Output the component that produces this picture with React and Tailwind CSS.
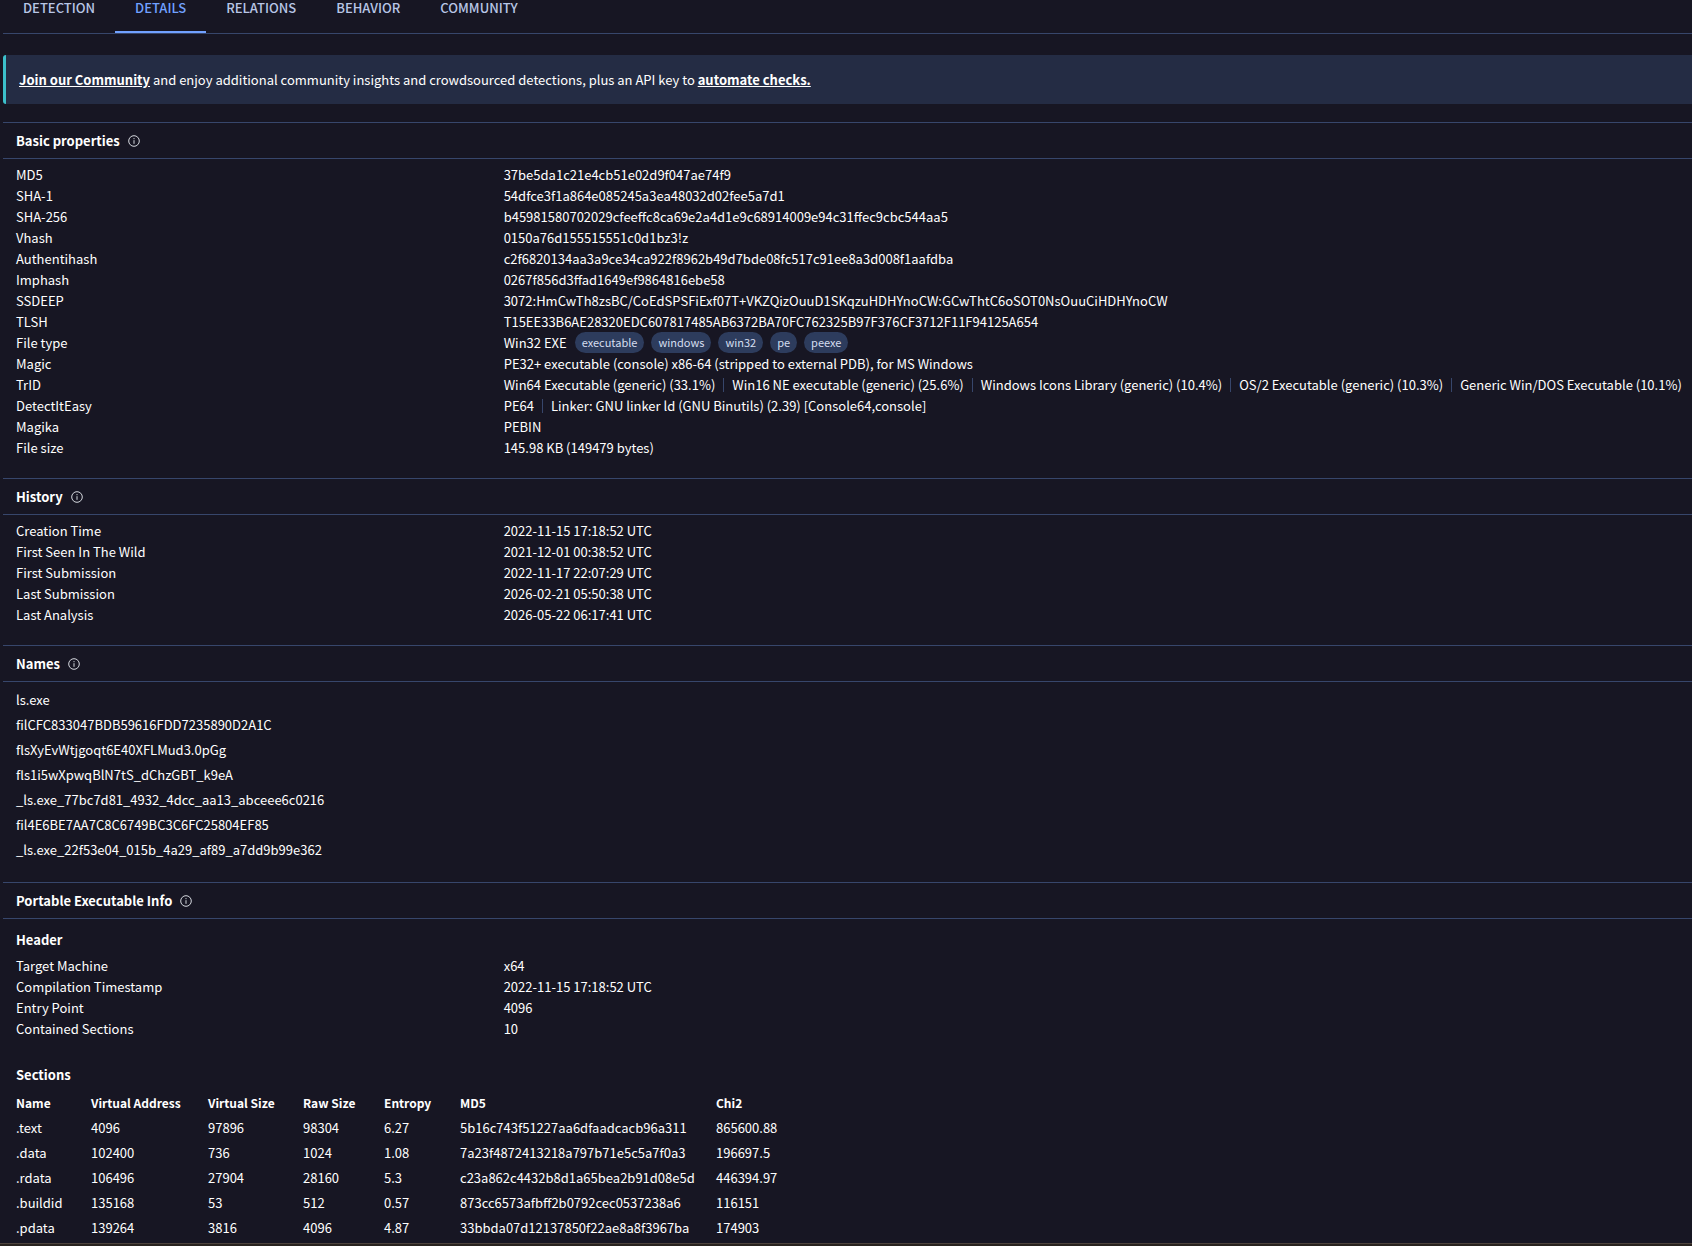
const tabs = ['DETECTION', 'DETAILS', 'RELATIONS', 'BEHAVIOR', 'COMMUNITY'];

const basicProperties = [
  { label: 'MD5', value: '37be5da1c21e4cb51e02d9f047ae74f9' },
  { label: 'SHA-1', value: '54dfce3f1a864e085245a3ea48032d02fee5a7d1' },
  { label: 'SHA-256', value: 'b45981580702029cfeeffc8ca69e2a4d1e9c68914009e94c31ffec9cbc544aa5' },
  { label: 'Vhash', value: '0150a76d155515551c0d1bz3!z' },
  { label: 'Authentihash', value: 'c2f6820134aa3a9ce34ca922f8962b49d7bde08fc517c91ee8a3d008f1aafdba' },
  { label: 'Imphash', value: '0267f856d3ffad1649ef9864816ebe58' },
  { label: 'SSDEEP', value: '3072:HmCwTh8zsBC/CoEdSPSFiExf07T+VKZQizOuuD1SKqzuHDHYnoCW:GCwThtC6oSOT0NsOuuCiHDHYnoCW' },
  { label: 'TLSH', value: 'T15EE33B6AE28320EDC607817485AB6372BA70FC762325B97F376CF3712F11F94125A654' },
  { label: 'File type', value: 'Win32 EXE', tags: ['executable', 'windows', 'win32', 'pe', 'peexe'] },
  { label: 'Magic', value: 'PE32+ executable (console) x86-64 (stripped to external PDB), for MS Windows' },
  {
    label: 'TrID',
    value: [
      'Win64 Executable (generic) (33.1%)',
      'Win16 NE executable (generic) (25.6%)',
      'Windows Icons Library (generic) (10.4%)',
      'OS/2 Executable (generic) (10.3%)',
      'Generic Win/DOS Executable (10.1%)',
    ],
  },
  { label: 'DetectItEasy', value: ['PE64', 'Linker: GNU linker ld (GNU Binutils) (2.39) [Console64,console]'] },
  { label: 'Magika', value: 'PEBIN' },
  { label: 'File size', value: '145.98 KB (149479 bytes)' },
];

const history = [
  { label: 'Creation Time', value: '2022-11-15 17:18:52 UTC' },
  { label: 'First Seen In The Wild', value: '2021-12-01 00:38:52 UTC' },
  { label: 'First Submission', value: '2022-11-17 22:07:29 UTC' },
  { label: 'Last Submission', value: '2026-02-21 05:50:38 UTC' },
  { label: 'Last Analysis', value: '2026-05-22 06:17:41 UTC' },
];

const names = [
  'ls.exe',
  'filCFC833047BDB59616FDD7235890D2A1C',
  'flsXyEvWtjgoqt6E40XFLMud3.0pGg',
  'fls1i5wXpwqBlN7tS_dChzGBT_k9eA',
  '_ls.exe_77bc7d81_4932_4dcc_aa13_abceee6c0216',
  'fil4E6BE7AA7C8C6749BC3C6FC25804EF85',
  '_ls.exe_22f53e04_015b_4a29_af89_a7dd9b99e362',
];

const peHeader = [
  { label: 'Target Machine', value: 'x64' },
  { label: 'Compilation Timestamp', value: '2022-11-15 17:18:52 UTC' },
  { label: 'Entry Point', value: '4096' },
  { label: 'Contained Sections', value: '10' },
];

const sectionColumns = [
  { name: 'Name', width: 'w-[75px]' },
  { name: 'Virtual Address', width: 'w-[117px]' },
  { name: 'Virtual Size', width: 'w-[95px]' },
  { name: 'Raw Size', width: 'w-[81px]' },
  { name: 'Entropy', width: 'w-[76px]' },
  { name: 'MD5', width: 'w-[256px]' },
  { name: 'Chi2', width: 'w-[95px]' },
];

const sectionRows = [
  ['.text', '4096', '97896', '98304', '6.27', '5b16c743f51227aa6dfaadcacb96a311', '865600.88'],
  ['.data', '102400', '736', '1024', '1.08', '7a23f4872413218a797b71e5c5a7f0a3', '196697.5'],
  ['.rdata', '106496', '27904', '28160', '5.3', 'c23a862c4432b8d1a65bea2b91d08e5d', '446394.97'],
  ['.buildid', '135168', '53', '512', '0.57', '873cc6573afbff2b0792cec0537238a6', '116151'],
  ['.pdata', '139264', '3816', '4096', '4.87', '33bbda07d12137850f22ae8a8f3967ba', '174903'],
];

const InfoIcon = () => (
  <svg viewBox="0 0 12 12" className="size-3 text-[#d5d8de]" fill="none" stroke="currentColor" aria-hidden="true">
    <circle cx="6" cy="6" r="5.3" strokeWidth="1" />
    <path d="M6 5.2v3.6M6 3.1v1.1" strokeWidth="1" />
  </svg>
);

const Panel = ({ title, className = '', children }) => (
  <section className="border-t border-[#37466b]">
    <div className="flex h-9 items-center gap-2 border-b border-[#37466b] px-[13px]">
      <h2 className="font-bold">{title}</h2>
      <button type="button" aria-label={`About ${title}`}><InfoIcon /></button>
    </div>
    <div className={`pl-[13px] pr-1 ${className}`}>{children}</div>
  </section>
);

const PropertyValue = ({ value, tags }) => {
  if (Array.isArray(value)) {
    return (
      <ul className="flex items-center">
        {value.map((item, i) => (
          <li key={item} className="flex items-center">
            {i > 0 && <span className="mx-2 h-[14px] w-px bg-[#37466b]" />}
            {item}
          </li>
        ))}
      </ul>
    );
  }
  if (tags) {
    return (
      <div className="flex items-center">
        <span className="mr-2">{value}</span>
        <div className="flex gap-[7px]">
          {tags.map((tag) => (
            <a key={tag} href="#" className="h-[21px] rounded-full bg-[#2d3c5d] px-[7px] text-[11px] leading-[21px] text-[#d5def0]">{tag}</a>
          ))}
        </div>
      </div>
    );
  }
  return value;
};

const PropertyList = ({ items }) => (
  <dl>
    {items.map((item) => (
      <div key={item.label} className="grid grid-cols-[minmax(0,7fr)_minmax(0,17fr)] leading-[21px]">
        <dt>{item.label}</dt>
        <dd className="whitespace-nowrap"><PropertyValue {...item} /></dd>
      </div>
    ))}
  </dl>
);

const App = () => (
  <div className="min-h-screen flex flex-col bg-[#171623] font-['Noto_Sans_CJK_SC',sans-serif] text-[13px] text-white">
    <main className="grow pl-[3px] pb-[2px]">
      <nav className="flex h-[34px] border-b border-[#37466b]">
        {tabs.map((tab) => (
          <a
            key={tab}
            href="#"
            className={`px-5 font-medium leading-4 ${tab === 'DETAILS' ? 'border-b-2 border-[#71a1ff] text-[#71a1ff]' : 'text-[#b8c6e6]'}`}
          >
            {tab}
          </a>
        ))}
      </nav>

      <div className="mt-[21px] mb-[18px] rounded-l-[3px] border-l-[3px] border-[#3cc0cb] bg-[#242c44] px-[13px] py-[14px] leading-[21px]">
        <a href="#" className="font-bold underline">Join our Community</a> and enjoy additional community insights and crowdsourced detections, plus an API key to <a href="#" className="font-bold underline">automate checks.</a>
      </div>

      <Panel title="Basic properties" className="pt-[5px] pb-5">
        <PropertyList items={basicProperties} />
      </Panel>

      <Panel title="History" className="pt-[5px] pb-5">
        <PropertyList items={history} />
      </Panel>

      <Panel title="Names" className="pt-[5px] pb-5">
        <ul className="leading-[25px]">
          {names.map((name) => <li key={name}>{name}</li>)}
        </ul>
      </Panel>

      <Panel title="Portable Executable Info" className="pt-[10px]">
        <h3 className="mb-[5px] font-bold leading-[21px]">Header</h3>
        <PropertyList items={peHeader} />
        <h3 className="mt-[25px] mb-[5px] font-bold leading-[21px]">Sections</h3>
        <table className="text-left leading-[25px]">
          <thead>
            <tr className="text-xs">
              {sectionColumns.map(({ name, width }) => (
                <th key={name} className={`${width} p-0 font-bold leading-[25px] whitespace-nowrap`}>{name}</th>
              ))}
            </tr>
          </thead>
          <tbody>
            {sectionRows.map((row) => (
              <tr key={row[0]}>
                {row.map((cell, i) => <td key={sectionColumns[i].name} className="p-0">{cell}</td>)}
              </tr>
            ))}
          </tbody>
        </table>
      </Panel>
    </main>
    <footer className="h-[3px] border-t border-[#4d433d] bg-[#29231f]" />
  </div>
);

export default App;
